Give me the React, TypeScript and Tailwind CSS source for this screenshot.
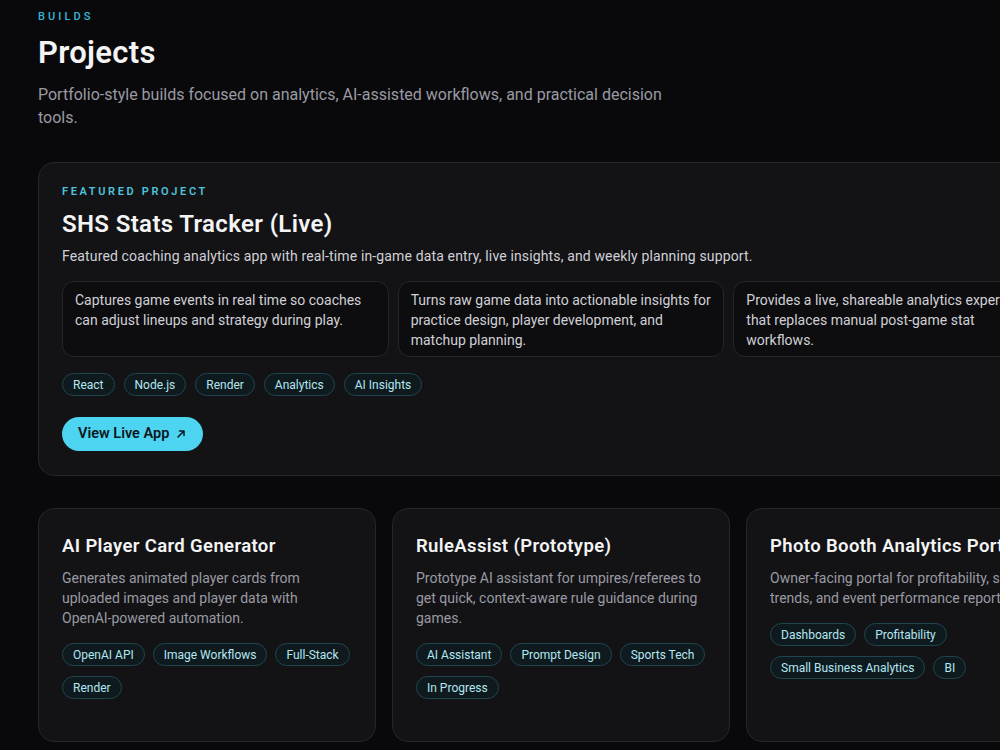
import React from "react";

const Tag = ({ label }: { label: string }) => (
  <span className="inline-flex h-[23px] items-center rounded-full border border-[#1f4650] bg-[#0f1a1e] px-[10px] text-[12px] leading-none text-[#b3e7f2]">
    {label}
  </span>
);

const highlights: React.ReactNode[] = [
  "Captures game events in real time so coaches can adjust lineups and strategy during play.",
  "Turns raw game data into actionable insights for practice design, player development, and matchup planning.",
  <>
    Provides a live, shareable analytics experience that replaces manual post-game stat
    <br />
    workflows.
  </>,
];

const projects: { title: string; desc: React.ReactNode; tags: string[] }[] = [
  {
    title: "AI Player Card Generator",
    desc: (
      <>
        Generates animated player cards from uploaded images and player data with{" "}
        <span className="whitespace-nowrap">OpenAI-powered</span> automation.
      </>
    ),
    tags: ["OpenAI API", "Image Workflows", "Full-Stack", "Render"],
  },
  {
    title: "RuleAssist (Prototype)",
    desc: "Prototype AI assistant for umpires/referees to get quick, context-aware rule guidance during games.",
    tags: ["AI Assistant", "Prompt Design", "Sports Tech", "In Progress"],
  },
  {
    title: "Photo Booth Analytics Portal",
    desc: "Owner-facing portal for profitability, sales trends, and event performance reporting.",
    tags: ["Dashboards", "Profitability", "Small Business Analytics", "BI"],
  },
];

export default function App() {
  return (
    <div
      className="min-h-[750px] w-full overflow-hidden bg-[#09090b] text-white"
      style={{ fontFamily: "Roboto, 'Noto Sans', sans-serif" }}
    >
      <div className="ml-[38px] w-[1046px] pt-[10px]">
        <div className="text-[11px] font-medium uppercase leading-[13px] tracking-[0.28em] text-[#38b6d8]">
          Builds
        </div>
        <h1 className="mt-[12px] text-[31px] font-semibold leading-[36px] tracking-[0.01em] text-[#f4f4f5]">
          Projects
        </h1>
        <p className="mt-[12px] max-w-[640px] text-[16px] leading-[23px] text-[#9a9aa3]">
          Portfolio-style builds focused on analytics, AI-assisted workflows, and practical decision tools.
        </p>

        <div className="mt-[33px] rounded-[16px] border border-[#26262a] bg-[#131316] px-[23px] pb-[24px] pt-[22px]">
          <div className="text-[11px] font-semibold uppercase leading-[14px] tracking-[0.24em] text-[#4fc3dc]">
            Featured Project
          </div>
          <h2 className="mt-[9px] text-[24px] font-semibold leading-[32px] tracking-[0.015em] text-[#f4f4f5]">
            SHS Stats Tracker (Live)
          </h2>
          <p className="mt-[6px] text-[14px] leading-[20px] tracking-[0.01em] text-[#d0d0d6]">
            Featured coaching analytics app with real-time in-game data entry, live insights, and weekly planning support.
          </p>
          <div className="mt-[15px] grid grid-cols-3 gap-[9px]">
            {highlights.map((h, i) => (
              <div
                key={i}
                className="h-[76px] rounded-[12px] border border-[#26262a] bg-[#0d0d0f] px-[12px] pt-[8px] text-[14px] leading-[20px] text-[#d0d0d6]"
              >
                {h}
              </div>
            ))}
          </div>
          <div className="mt-[16px] flex flex-wrap gap-[9px]">
            {["React", "Node.js", "Render", "Analytics", "AI Insights"].map((t) => (
              <Tag key={t} label={t} />
            ))}
          </div>
          <button className="mt-[21px] flex h-[34px] items-center gap-[7px] rounded-full bg-[#4dd4f1] pl-[16px] pr-[17px] text-[14.5px] font-semibold text-[#0b1820]">
            View Live App
            <svg width="10" height="10" viewBox="0 0 10 10" fill="none" stroke="currentColor" strokeWidth="1.5" strokeLinecap="round" strokeLinejoin="round">
              <path d="M2 8L8 2M3.5 2H8V6.5" />
            </svg>
          </button>
        </div>

        <div className="mt-[32px] grid grid-cols-3 gap-[16px]">
          {projects.map((p) => (
            <div
              key={p.title}
              className="h-[234px] rounded-[16px] border border-[#26262a] bg-[#131316] px-[23px] pt-[24px]"
            >
              <h3 className="whitespace-nowrap text-[18.5px] font-semibold leading-[26px] tracking-[0.02em] text-[#f4f4f5]">
                {p.title}
              </h3>
              <p className="mt-[9px] text-[14px] leading-[20px] text-[#9a9aa3]">{p.desc}</p>
              <div className="mt-[15px] flex flex-wrap gap-x-[8px] gap-y-[10px]">
                {p.tags.map((t) => (
                  <Tag key={t} label={t} />
                ))}
              </div>
            </div>
          ))}
        </div>
      </div>
    </div>
  );
}
